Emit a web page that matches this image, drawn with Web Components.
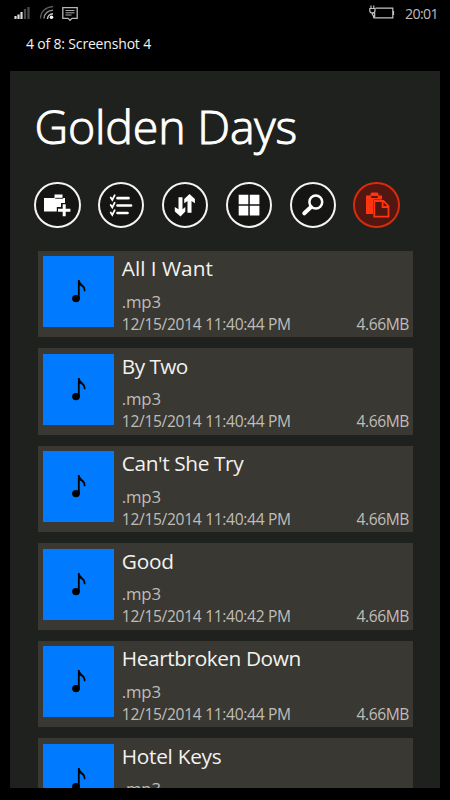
<!DOCTYPE html>
<html lang="en"><head><meta charset="utf-8"><title>Golden Days</title>
<style>html,body{margin:0;background:#000}body{width:450px;height:800px;overflow:hidden;font-family:"Open Sans","Noto Sans",sans-serif}</style></head>
<body><music-app></music-app>
<script>
const define=(name,html,setup)=>customElements.define(name,class extends HTMLElement{
  connectedCallback(){
    if(this.shadowRoot)return;
    const t=document.createElement('template');t.innerHTML=html;
    this.attachShadow({mode:'open'}).append(t.content.cloneNode(true));
    if(setup)setup(this,this.shadowRoot);
  }
});
// Single line of text spread over a given advance width.
define('fit-text','<style>:host{display:block;white-space:nowrap}span{display:inline-block}</style><span></span>',(el,r)=>{
  const s=r.querySelector('span');s.textContent=el.getAttribute('text');
  const w=+el.getAttribute('w');
  s.style.letterSpacing=(w-s.getBoundingClientRect().width)/s.textContent.length+'px';
});
define('status-bar',`<style>
:host{display:flex;height:27px;box-sizing:border-box;padding:0 12px 0 13px;justify-content:space-between;align-items:center}
svg{display:block}.r{display:flex;align-items:center;gap:10px}
fit-text{font-size:14.2px;line-height:27px;color:#bdbdbd}
</style>
<svg width="66" height="27" viewBox="13 0 66 27" fill="none">
<path d="M15.500 19v-3M18.500 19v-4.500M21.500 19v-7" stroke="#ddd" stroke-width="2.2"/>
<path d="M25 19v-10M28.500 19v-12" stroke="#4b4b4b" stroke-width="2.2"/>
<path d="M40.500 18.500C40.500 11.500 46 7 53 6.500" stroke="#5c5c5c" stroke-width="1.3"/>
<path d="M44 18.500C44 13.500 48 10.500 53 10.300" stroke="#8a8a8a" stroke-width="1.4"/>
<path d="M47.500 19C47.500 16 50 14 53 13.800" stroke="#ccc" stroke-width="1.4"/>
<circle cx="51.500" cy="17.300" r="1.8" fill="#fff"/>
<path d="M62.800 7.700h14.400v10.600h-5.200l-2 2-2-2h-5.200z" stroke="#b8b8b8" stroke-width="1.3"/>
<path d="M65.500 10.500h9M65.500 12.800h9M65.500 15h6" stroke="#aaa" stroke-width="1"/>
</svg>
<div class="r"><svg width="27" height="27" viewBox="368 0 27 27" fill="none" stroke="#c4c4c4" stroke-width="1.2">
<path d="M375.500 8.200h17.300v9.600h-19.300M373.500 17.800v-2.500M393.500 11v4"/>
<path d="M371 5.500v3M373.800 5.500v3M369.800 8.500h5.200v2.200q0 2.200-2.600 2.200t-2.600-2.200zM372.400 13v2.500"/><path d="M374.500 12.500v4h-1.500" stroke-width="1.5"/></svg>
<fit-text text="20:01" w="33"></fit-text></div>`);
define('round-button',`<style>
:host{display:grid;place-items:center;width:46.600px;height:46.600px;box-sizing:border-box;border:2.6px solid #f4f4f4;border-radius:50%;background:#151614;color:#fff}
:host([active]){border-color:#d92a0c;background:#521710;color:#ff3510}
</style><slot></slot>`);
define('app-icon','<style>:host{display:block;width:30px;height:30px}svg{display:block}</style><svg width="30" height="30" viewBox="-15 -15 30 30" fill="currentColor"></svg>',(el,r)=>{
  r.querySelector('svg').innerHTML={
  add:'<path d="M-13-7h10.500v-3.500h8v3.500h2.500v13.500h-21z"/><path d="M-1.800-6.700h8" stroke="#151614" stroke-width=".9"/><path d="M7-2v14M-.2 5h15" stroke="#151614" stroke-width="6"/><path d="M7.200-.8v12M1 5.200h12.400" stroke="currentColor" stroke-width="3"/>',
  list:'<g fill="none" stroke="currentColor" stroke-linecap="round"><path d="M-3.500-6.800h11M-3.500.5h13.500M-3.500 8h10" stroke-width="2.700"/><path d="M-10.300-7.500l1.600 2.500 2.400-4.800M-10.300 0l1.600 2.500 2.400-4.800M-10.300 7.500l1.600 2.500 2.400-4.800" stroke-width="1.8"/></g>',
  sort:'<path d="M-6.500-7.800h4v12l2.800-2.300v4.500l-4.800 5-5.700-5v-4.500l3.700 2.300z"/><path d="M2.500 7.700v-11.800l-3.300 2.400v-4.200l5.300-5 5.400 5v4.200l-3.400-2.400v11.800z"/>',
  grid:'<path d="M-10.300-10.300h9.600v9.600h-9.600zM.8-10.300h9.600v9.600h-9.600zM-10.300.8h9.600v9.600h-9.600zM.8.8h9.600v9.600h-9.600z"/>',
  search:'<circle cx="2.800" cy="-3" r="6.400" fill="none" stroke="currentColor" stroke-width="2.500"/><path d="M-2 2l-6.700 6.300" stroke="currentColor" stroke-width="4" stroke-linecap="round"/>',
  paste:'<path d="M-11-9.500h4.500v-1.500q0-1.500 1.500-1.500h5q1.500 0 1.500 1.500v1.500h3.500v4h-7.500q-1.500 0-1.500 1.500v13h-7z"/><path d="M-5.800-8h6.500" stroke="#521710" stroke-width="2"/><path d="M-2.700-4h9.200l5 5v10.700h-14.200zM5.600-4v6h6" fill="#521710" stroke="currentColor" stroke-width="1.800"/>'
  }[el.getAttribute('name')];
});
define('tool-bar',`<style>:host{display:flex;gap:17.300px;padding:0 0 0 24px;margin-top:24.900px}</style>
<round-button><app-icon name="add"></app-icon></round-button><round-button><app-icon name="list"></app-icon></round-button><round-button><app-icon name="sort"></app-icon></round-button><round-button><app-icon name="grid"></app-icon></round-button><round-button><app-icon name="search"></app-icon></round-button><round-button active><app-icon name="paste"></app-icon></round-button>`);
define('file-row',`<style>
:host{display:flex;width:375px;height:86.400px;flex:none;box-sizing:border-box;background:#3a3833;padding-left:5.300px}
.cover{width:71px;height:71px;margin-top:5.400px;background:#007bff;flex:none}
.info{flex:1;margin-left:8px;padding:3.700px 3.500px 0 0;color:#bfbdb8}
.name{font-size:20.800px;line-height:28px;color:#f3f2ee}
.type{font-size:16.800px;line-height:22px;margin-top:8.200px}
.meta{display:flex;justify-content:space-between;font-size:15.600px;line-height:20px;margin-top:1.200px}
svg{display:block}</style>
<div class="cover"><svg width="71" height="71" viewBox="0 0 71 71"><ellipse cx="33" cy="42.600" rx="3.900" ry="3.700"/><path d="M34.900 24h1.700c.5 4.300 5.800 5 5.800 9.800v1.500h-1.500c0-3.300-1.700-4.800-4.200-5.700v13h-1.800z"/></svg></div>
<div class="info"><div class="name"></div><fit-text class="type" text=".mp3" w="39"></fit-text><div class="meta"></div></div>`,(el,r)=>{
  r.querySelector('.name').innerHTML=`<fit-text text="${el.getAttribute('name')}" w="${el.getAttribute('w')}"></fit-text>`;
  const time=el.getAttribute('time');
  if(time)r.querySelector('.meta').innerHTML=`<fit-text text="12/15/2014 ${time} PM" w="169"></fit-text><fit-text text="4.66MB" w="52.500"></fit-text>`;
});
define('file-list',`<style>:host{display:flex;flex-direction:column;gap:11.150px;margin:22.200px 0 0 27.500px}</style>
<file-row name="All I Want" w="91" time="11:40:44"></file-row><file-row name="By Two" w="66" time="11:40:44"></file-row><file-row name="Can't She Try" w="121.500" time="11:40:44"></file-row><file-row name="Good" w="52" time="11:40:42"></file-row><file-row name="Heartbroken Down" w="179" time="11:40:44"></file-row><file-row name="Hotel Keys" w="99.500"></file-row>`);
define('music-app',`<style>
:host{display:flex;flex-direction:column;width:450px;height:800px;background:#000;overflow:hidden}
.cap{font-size:14px;line-height:20px;color:#f2f2f2;margin:7px 0 0 26px}
main{display:flow-root;margin:16.500px 10px 0;height:717.500px;overflow:hidden;background:#1f211e}
.title{font-size:46.500px;line-height:62px;font-weight:300;color:#fff;margin:24.500px 0 0 24.500px;-webkit-text-stroke:1px #fff}
</style><status-bar></status-bar><fit-text class="cap" text="4 of 8: Screenshot 4" w="125"></fit-text>
<main><fit-text class="title" text="Golden Days" w="262.500"></fit-text><tool-bar></tool-bar><file-list></file-list></main>`);
</script></body></html>
